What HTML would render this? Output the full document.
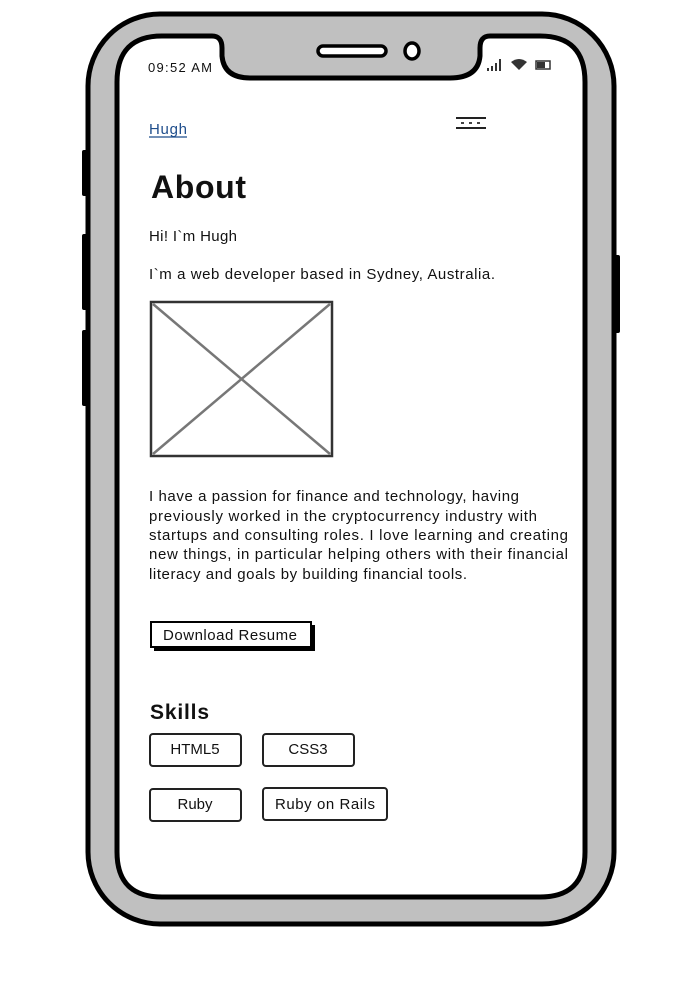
<!DOCTYPE html>
<html><head><meta charset="utf-8"><style>
html,body{margin:0;padding:0;background:#fff;width:690px;height:1000px;overflow:hidden}
svg{display:block}
text{font-family:"Liberation Sans",sans-serif;fill:#111}
</style></head><body>
<svg width="690" height="1000" viewBox="0 0 690 1000" xmlns="http://www.w3.org/2000/svg">
<!-- side buttons -->
<rect x="82" y="150" width="8" height="46" rx="2" fill="#000"/>
<rect x="82" y="234" width="8" height="76" rx="2" fill="#000"/>
<rect x="82" y="330" width="8" height="76" rx="2" fill="#000"/>
<rect x="612" y="255" width="8" height="78" rx="2" fill="#000"/>
<!-- outer body -->
<rect x="88" y="14" width="526" height="910" rx="72" fill="#c0c0c0" stroke="#000" stroke-width="5"/>
<!-- screen with notch -->
<path d="M162 36 H212 Q222 36 222 48 V56 Q224 78 250 78 H450 Q478 78 480 56 V48 Q480 36 490 36 H540 Q585 36 585 82 V852 Q585 897 540 897 H162 Q117 897 117 852 V82 Q117 36 162 36 Z" fill="#fff" stroke="#000" stroke-width="5"/>
<!-- speaker & camera -->
<rect x="318" y="46" width="68" height="10" rx="5" fill="#fff" stroke="#000" stroke-width="3.5"/>
<ellipse cx="412" cy="51" rx="7" ry="8" fill="#fff" stroke="#000" stroke-width="3.5"/>
<!-- status bar -->
<text x="148" y="72" font-size="13" fill="#333" textLength="64">09:52 AM</text>
<g fill="#333">
<rect x="487" y="68" width="2" height="3"/><rect x="491" y="66" width="2" height="5"/><rect x="495" y="63" width="2" height="8"/><rect x="499" y="59" width="2" height="12"/>
<path d="M511 62 Q519 56 527 62 L519 70 Z"/>
<rect x="536" y="61" width="14" height="8" fill="none" stroke="#333" stroke-width="1.5"/><rect x="537" y="62" width="8" height="6"/>
</g>
<!-- nav -->
<text x="149" y="134" font-size="15" style="fill:#1f4e8c" textLength="38">Hugh</text>
<line x1="149" y1="137" x2="187" y2="137" stroke="#1f4e8c" stroke-width="1.2"/>
<rect x="456" y="117" width="30" height="2" fill="#222"/>
<rect x="456" y="127" width="30" height="2" fill="#222"/>
<g fill="#444"><rect x="461" y="122" width="3" height="2"/><rect x="469" y="122" width="3" height="2"/><rect x="477" y="122" width="3" height="2"/></g>
<!-- content -->
<text x="151" y="198" font-size="32" font-weight="bold" textLength="95">About</text>
<text x="149" y="241" font-size="15" textLength="88">Hi! I`m Hugh</text>
<text x="149" y="279" font-size="15" textLength="346">I`m a web developer based in Sydney, Australia.</text>
<rect x="151" y="302" width="181" height="154" fill="#fff" stroke="#333" stroke-width="2.5"/>
<line x1="153" y1="304" x2="330" y2="454" stroke="#777" stroke-width="2.5"/>
<line x1="330" y1="304" x2="153" y2="454" stroke="#777" stroke-width="2.5"/>
<g font-size="15">
<text x="149" y="501" textLength="370">I have a passion for finance and technology, having</text>
<text x="149" y="521" textLength="388">previously worked in the cryptocurrency industry with</text>
<text x="149" y="540" textLength="419">startups and consulting roles. I love learning and creating</text>
<text x="149" y="559" textLength="419">new things, in particular helping others with their financial</text>
<text x="149" y="579" textLength="318">literacy and goals by building financial tools.</text>
</g>
<rect x="154" y="625" width="161" height="26" fill="#000"/>
<rect x="151" y="622" width="160" height="25" fill="#fff" stroke="#000" stroke-width="2"/>
<text x="163" y="640" font-size="15" textLength="134">Download Resume</text>
<text x="150" y="719" font-size="21" font-weight="bold" fill="#222" textLength="59">Skills</text>
<g fill="#fff" stroke="#222" stroke-width="2">
<rect x="150" y="734" width="91" height="32" rx="3"/>
<rect x="263" y="734" width="91" height="32" rx="3"/>
<rect x="150" y="789" width="91" height="32" rx="3"/>
<rect x="263" y="788" width="124" height="32" rx="3"/>
</g>
<g font-size="15" text-anchor="middle" fill="#333">
<text x="195" y="754">HTML5</text>
<text x="308" y="754">CSS3</text>
<text x="195" y="809">Ruby</text>
<text x="325" y="809" textLength="100">Ruby on Rails</text>
</g>
</svg>
</body></html>
